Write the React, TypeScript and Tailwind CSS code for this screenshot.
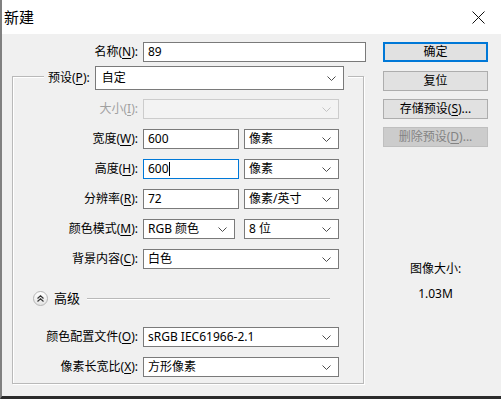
import React from "react";

const font = "font-['Noto_Sans','Noto_Sans_CJK_SC',sans-serif]";

function Chevron({ disabled }: { disabled?: boolean }) {
  return (
    <svg width="9" height="5" viewBox="0 0 9 5" className="shrink-0">
      <path
        d="M0.5 0.5 L4.5 4.5 L8.5 0.5"
        fill="none"
        stroke={disabled ? "#c4c4c4" : "#4d4d4d"}
        strokeWidth="1"
      />
    </svg>
  );
}

function Key({ k }: { k: string }) {
  return <u className="underline-offset-2">{k}</u>;
}

function Label({ text, k, w = "w-[125px]", disabled }: { text: string; k: string; w?: string; disabled?: boolean }) {
  return (
    <div className={`${w} shrink-0 text-right leading-[20px] ${disabled ? "text-[#a0a0a0]" : "text-black"}`}>
      {text}(<Key k={k} />):
    </div>
  );
}

function Select({ value, w, h = "h-[20px]", pl = "pl-[4px]", disabled }: { value: string; w: string; h?: string; pl?: string; disabled?: boolean }) {
  return (
    <div
      className={`${w} ${h} ${pl} ml-[5px] pr-[7px] flex items-center justify-between border ${
        disabled ? "border-[#cccccc] bg-[#f3f3f3]" : "border-[#7a7a7a] bg-white"
      }`}
    >
      <span className="leading-[18px] whitespace-nowrap">{value}</span>
      <Chevron disabled={disabled} />
    </div>
  );
}

function Input({ value, w, focused }: { value: string; w: string; focused?: boolean }) {
  return (
    <div
      className={`${w} h-[20px] ml-[5px] pl-[4px] flex items-center bg-white border ${
        focused ? "border-[#0078d7]" : "border-[#7a7a7a]"
      }`}
    >
      <span className="leading-[18px]">{value}</span>
      {focused && <span className="w-px h-[14px] bg-black" />}
    </div>
  );
}

function Button({ children, primary, disabled, className = "" }: { children: React.ReactNode; primary?: boolean; disabled?: boolean; className?: string }) {
  return (
    <div
      className={`w-[105px] h-[20px] flex items-center justify-center leading-[18px] ${className} ${
        primary
          ? "border-2 border-[#0078d7] bg-[#e1e1e1] text-black"
          : disabled
          ? "border border-[#bfbfbf] bg-[#cccccc] text-[#838383]"
          : "border border-[#adadad] bg-[#e1e1e1] text-black"
      }`}
    >
      {children}
    </div>
  );
}

export default function App() {
  return (
    <div className={`w-[501px] h-[399px] bg-[#f0f0f0] flex flex-col border-l-2 border-[#808080] border-b-[3px] border-b-[#2b2b2b] overflow-hidden text-[12px] ${font}`}>
      {/* 标题栏 */}
      <div className="h-[34px] bg-white flex items-center justify-between pl-[2px] pr-[16px] shrink-0">
        <span className="text-[15px] leading-[20px] text-black">新建</span>
        <svg width="13" height="13" viewBox="0 0 13 13">
          <path d="M0.5 0.5 L12.5 12.5 M12.5 0.5 L0.5 12.5" stroke="#111" strokeWidth="1" />
        </svg>
      </div>

      <div className="flex">
        {/* 左侧表单 */}
        <div className="w-[368px] shrink-0">
          <div className="mt-[8px] flex items-center h-[20px]">
            <Label text="名称" k="N" w="w-[136px]" />
            <Input value="89" w="w-[223px]" />
          </div>

          <div className="mt-[14px] ml-[10px] w-[352px] border border-[#b9b9b9] shadow-[inset_1px_1px_0_#fff,1px_1px_0_#fff] pb-[6px]">
            {/* 预设 */}
            <div className="-mt-[11px] ml-[31px] w-fit px-[4px] bg-[#f0f0f0] flex items-center h-[24px]">
              <div className="leading-[20px]">
                预设(<Key k="P" />):
              </div>
              <Select value="自定" w="w-[249px]" h="h-[24px]" pl="pl-[6px]" />
            </div>

            <div className="mt-[9px] flex items-center h-[20px]">
              <Label text="大小" k="I" disabled />
              <Select value="" w="w-[196px]" disabled />
            </div>
            <div className="mt-[10px] flex items-center h-[20px]">
              <Label text="宽度" k="W" />
              <Input value="600" w="w-[96px]" />
              <Select value="像素" w="w-[95px]" />
            </div>
            <div className="mt-[10px] flex items-center h-[20px]">
              <Label text="高度" k="H" />
              <Input value="600" w="w-[96px]" focused />
              <Select value="像素" w="w-[95px]" />
            </div>
            <div className="mt-[10px] flex items-center h-[20px]">
              <Label text="分辨率" k="R" />
              <Input value="72" w="w-[96px]" />
              <Select value="像素/英寸" w="w-[95px]" />
            </div>
            <div className="mt-[10px] flex items-center h-[20px]">
              <Label text="颜色模式" k="M" />
              <Select value="RGB 颜色" w="w-[92px]" />
              <div className="ml-[4px]">
                <Select value="8 位" w="w-[95px]" />
              </div>
            </div>
            <div className="mt-[10px] flex items-center h-[20px]">
              <Label text="背景内容" k="C" />
              <Select value="白色" w="w-[196px]" />
            </div>

            {/* 高级 */}
            <div className="mt-[22px] flex items-center h-[15px]">
              <div className="ml-[20px] w-[15px] h-[15px] rounded-full border border-[#b5b5b5] bg-gradient-to-b from-white to-[#e4e4e4] flex items-center justify-center">
                <svg width="7" height="7" viewBox="0 0 7 7">
                  <path d="M0.5 3.5 L3.5 0.8 L6.5 3.5 M0.5 6.5 L3.5 3.8 L6.5 6.5" fill="none" stroke="#333" strokeWidth="1.2" />
                </svg>
              </div>
              <span className="ml-[6px] text-[13px] leading-[15px]">高级</span>
              <div className="flex-1 ml-[7px] mr-[33px] h-[2px] border-t border-[#b9b9b9] border-b border-b-white" />
            </div>

            <div className="mt-[21px] flex items-center h-[20px]">
              <Label text="颜色配置文件" k="O" />
              <Select value="sRGB IEC61966-2.1" w="w-[196px]" />
            </div>
            <div className="mt-[10px] flex items-center h-[20px]">
              <Label text="像素长宽比" k="X" />
              <Select value="方形像素" w="w-[196px]" />
            </div>
          </div>
        </div>

        {/* 右侧按钮 */}
        <div className="ml-[13px] flex flex-col">
          <Button primary className="mt-[8px]">确定</Button>
          <Button className="mt-[9px]">复位</Button>
          <Button className="mt-[8px]">
            存储预设(<Key k="S" />)...
          </Button>
          <Button disabled className="mt-[8px]">
            删除预设(<Key k="D" />)...
          </Button>
          <div className="mt-[115px] w-[105px] text-center leading-[14px]">图像大小:</div>
          <div className="mt-[11px] w-[105px] text-center leading-[14px]">1.03M</div>
        </div>
      </div>
    </div>
  );
}
